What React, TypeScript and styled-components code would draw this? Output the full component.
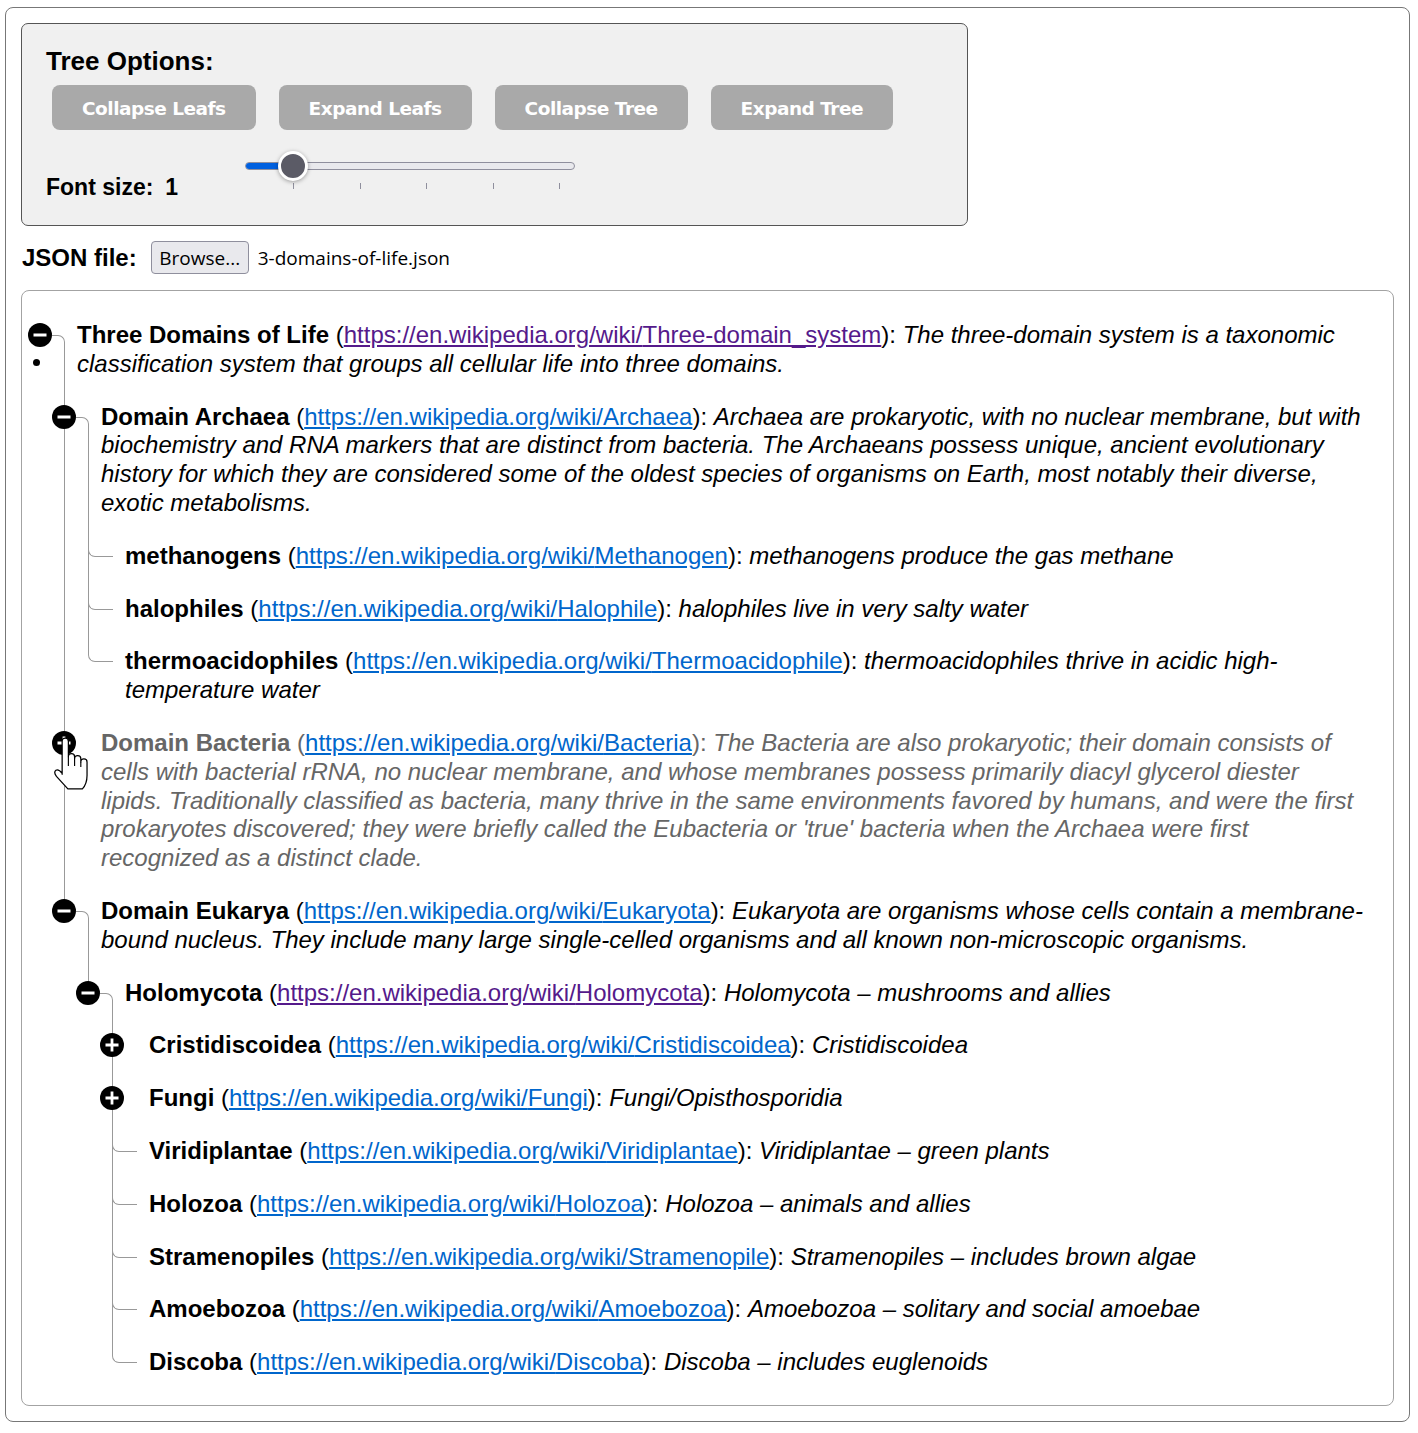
import React from "react";
import styled, { createGlobalStyle, css } from "styled-components";

const LINE = "#999";

const GlobalStyle = createGlobalStyle`
  html, body { margin: 0; padding: 0; background: #fff; }
  body { font-family: "Liberation Sans", Arial, sans-serif; color: #000; }
  *, *::before, *::after { box-sizing: border-box; }
`;

const Page = styled.div`
  margin: 7px 0 0 5px;
  width: 1405px;
  border: 1px solid #777;
  border-radius: 8px;
  padding: 15px;
`;

const OptionsPanel = styled.section`
  width: 947px;
  background: #f0f0f0;
  border: 1px solid #555;
  border-radius: 7px;
  padding: 22px 24px 24px;
`;

const PanelTitle = styled.h2`
  margin: 0;
  font-size: 26px;
  line-height: 30px;
  font-weight: bold;
`;

const ButtonRow = styled.div`
  display: flex;
  gap: 23px;
  margin: 9px 0 0 6px;
`;

const OptionButton = styled.button`
  height: 45px;
  padding: 0 30px;
  border: none;
  border-radius: 8px;
  background: #a9a9a9;
  color: #fff;
  font-family: "DejaVu Sans", Verdana, sans-serif;
  font-weight: bold;
  font-size: 18.5px;
  letter-spacing: -0.5px;
  padding-top: 1px;
`;

const FontRow = styled.div`
  display: flex;
  align-items: flex-start;
  margin-top: 21px;
`;

const FontLabel = styled.div`
  width: 199px;
  margin-top: 22px;
  font-size: 23px;
  line-height: 28px;
  font-weight: bold;
`;

const FontValue = styled.span`
  margin-left: 12px;
`;

const SliderBox = styled.div`
  position: relative;
  width: 330px;
  padding-top: 11px;
`;

const Track = styled.div`
  height: 8px;
  border: 1px solid #8f8f9d;
  border-radius: 4px;
  background: #e9e9ed;
  overflow: hidden;
  display: flex;
`;

const TrackFill = styled.div`
  background: #0060df;
  height: 100%;
`;

const Thumb = styled.div`
  position: absolute;
  top: 0;
  width: 30px;
  height: 30px;
  border-radius: 50%;
  background: #5b5b66;
  border: 3px solid #fff;
  box-shadow: 0 1px 4px rgba(0, 0, 0, 0.35);
`;

const Ticks = styled.div`
  display: flex;
  justify-content: space-between;
  margin-top: 13px;
  padding: 0 15px 0 48px;
`;

const Tick = styled.span`
  width: 1px;
  height: 6px;
  background: #8f8f9d;
`;

const FileRow = styled.div`
  display: flex;
  align-items: center;
  height: 33px;
  margin: 15px 0 16px 1px;
`;

const FileLabel = styled.span`
  font-size: 24px;
  font-weight: bold;
`;

const BrowseButton = styled.button`
  margin-left: 14px;
  height: 33px;
  width: 98px;
  padding: 0;
  border: 1px solid #8f8f9d;
  border-radius: 4px;
  background: #e9e9ed;
  color: #000;
  font-family: "Open Sans", "Noto Sans", sans-serif;
  font-size: 19px;
`;

const FileName = styled.span`
  margin-left: 9px;
  font-family: "Open Sans", "Noto Sans", sans-serif;
  font-size: 19px;
`;

const TreeBox = styled.div`
  border: 1px solid #a3a3a3;
  border-radius: 8px;
  padding: 30px 28px 28px 6px;
  font-size: 24px;
  line-height: 28.8px;
`;

const NodeBlock = styled.div<{ $root?: boolean; $last?: boolean; $leaf?: boolean }>`
  position: relative;
  ${(p) =>
    !p.$root &&
    css`
      padding-top: 24px;
      &::before {
        content: "";
        position: absolute;
        left: 12px;
        top: 0;
        height: 39px;
        width: ${p.$leaf ? "25px" : "1px"};
        border-left: 1px solid ${LINE};
        ${p.$leaf &&
        css`
          border-bottom: 1px solid ${LINE};
          border-bottom-left-radius: 7px;
        `}
      }
    `}
  ${(p) =>
    !p.$root &&
    !p.$last &&
    css`
      &::after {
        content: "";
        position: absolute;
        left: 12px;
        top: 0;
        bottom: 0;
        border-left: 1px solid ${LINE};
      }
    `}
`;

const Header = styled.div<{ $open?: boolean }>`
  position: relative;
  display: flex;
  ${(p) =>
    p.$open &&
    css`
      &::after {
        content: "";
        position: absolute;
        left: 24px;
        top: 14px;
        bottom: 0;
        width: 13px;
        border-top: 1px solid ${LINE};
        border-right: 1px solid ${LINE};
        border-top-right-radius: 7px;
      }
    `}
`;

const IconCol = styled.div`
  position: relative;
  width: 49px;
  flex-shrink: 0;
  display: flex;
  flex-direction: column;
`;

const ToggleSvg = styled.svg`
  position: relative;
  z-index: 1;
  display: block;
  margin-top: 2px;
  cursor: pointer;
`;

const Dot = styled.span`
  width: 7px;
  height: 7px;
  border-radius: 50%;
  background: #000;
  margin: 12px 0 0 5px;
`;

const CursorSvg = styled.svg`
  position: absolute;
  left: 0;
  top: 7px;
  z-index: 2;
  pointer-events: none;
`;

const Text = styled.div<{ $dim?: boolean }>`
  flex: 1;
  min-width: 0;
  color: ${(p) => (p.$dim ? "#666" : "#000")};
`;

const Name = styled.b`
  font-weight: bold;
`;

const Desc = styled.i`
  font-style: italic;
`;

const WikiLink = styled.a<{ $visited?: boolean }>`
  color: ${(p) => (p.$visited ? "#551a8b" : "#0066cc")};
  text-decoration: underline;
`;

const Children = styled.div`
  margin-left: 24px;
`;

type TNode = {
  name: string;
  page: string;
  desc: string;
  visited?: boolean;
  collapsed?: boolean;
  dim?: boolean;
  hover?: boolean;
  children?: TNode[];
};

const data: TNode = {
  name: "Three Domains of Life",
  page: "Three-domain_system",
  visited: true,
  desc: "The three-domain system is a taxonomic classification system that groups all cellular life into three domains.",
  children: [
    {
      name: "Domain Archaea",
      page: "Archaea",
      desc: "Archaea are prokaryotic, with no nuclear membrane, but with biochemistry and RNA markers that are distinct from bacteria. The Archaeans possess unique, ancient evolutionary history for which they are considered some of the oldest species of organisms on Earth, most notably their diverse, exotic metabolisms.",
      children: [
        { name: "methanogens", page: "Methanogen", desc: "methanogens produce the gas methane" },
        { name: "halophiles", page: "Halophile", desc: "halophiles live in very salty water" },
        { name: "thermoacidophiles", page: "Thermoacidophile", desc: "thermoacidophiles thrive in acidic high-temperature water" },
      ],
    },
    {
      name: "Domain Bacteria",
      page: "Bacteria",
      collapsed: true,
      dim: true,
      hover: true,
      desc: "The Bacteria are also prokaryotic; their domain consists of cells with bacterial rRNA, no nuclear membrane, and whose membranes possess primarily diacyl glycerol diester lipids. Traditionally classified as bacteria, many thrive in the same environments favored by humans, and were the first prokaryotes discovered; they were briefly called the Eubacteria or 'true' bacteria when the Archaea were first recognized as a distinct clade.",
    },
    {
      name: "Domain Eukarya",
      page: "Eukaryota",
      desc: "Eukaryota are organisms whose cells contain a membrane-bound nucleus. They include many large single-celled organisms and all known non-microscopic organisms.",
      children: [
        {
          name: "Holomycota",
          page: "Holomycota",
          visited: true,
          desc: "Holomycota – mushrooms and allies",
          children: [
            { name: "Cristidiscoidea", page: "Cristidiscoidea", collapsed: true, desc: "Cristidiscoidea" },
            { name: "Fungi", page: "Fungi", collapsed: true, desc: "Fungi/Opisthosporidia" },
            { name: "Viridiplantae", page: "Viridiplantae", desc: "Viridiplantae – green plants" },
            { name: "Holozoa", page: "Holozoa", desc: "Holozoa – animals and allies" },
            { name: "Stramenopiles", page: "Stramenopile", desc: "Stramenopiles – includes brown algae" },
            { name: "Amoebozoa", page: "Amoebozoa", desc: "Amoebozoa – solitary and social amoebae" },
            { name: "Discoba", page: "Discoba", desc: "Discoba – includes euglenoids" },
          ],
        },
      ],
    },
  ],
};

function ToggleIcon({ open }: { open: boolean }) {
  return (
    <ToggleSvg width="24" height="24" viewBox="0 0 24 24">
      <circle cx="12" cy="12" r="12" fill="#000" />
      <rect x="5.5" y="10.5" width="13" height="3" fill="#fff" />
      {!open && <rect x="10.6" y="5.5" width="2.8" height="13" fill="#fff" />}
    </ToggleSvg>
  );
}

function HandCursor() {
  return (
    <CursorSvg width="40" height="56" viewBox="0 0 38 54">
      <path
        d="M9.5 37 L9.5 5 Q9.5 2 12.5 2 Q15.5 2 15.5 5 L15.5 20 Q15.5 17 18.5 17 Q21.5 17 21.5 20 L21.5 22 Q21.5 19 24.5 19 Q27.5 19 27.5 22 L27.5 25 Q27.5 22 30.5 22 Q33.5 22 33.5 25 L33.5 38 Q33.5 46 29 51 L15 51 L4 39 Q1 35 3.5 33 Q6 31.5 9.5 36 Z"
        fill="#fff"
        stroke="#000"
        strokeWidth="1.2"
        strokeLinejoin="round"
      />
      <path d="M15.5 20 L15.5 29 M21.5 22 L21.5 29 M27.5 25 L27.5 30" stroke="#000" strokeWidth="1.1" />
    </CursorSvg>
  );
}

function TreeNode({ node, root, last }: { node: TNode; root?: boolean; last?: boolean }) {
  const hasKids = !!node.children && node.children.length > 0;
  const expandable = hasKids || !!node.collapsed;
  const open = hasKids && !node.collapsed;
  return (
    <NodeBlock $root={root} $last={last} $leaf={!expandable}>
      <Header $open={open}>
        <IconCol>
          {expandable && <ToggleIcon open={open} />}
          {root && <Dot />}
          {node.hover && <HandCursor />}
        </IconCol>
        <Text $dim={node.dim}>
          <Name>{node.name}</Name> (
          <WikiLink href={`https://en.wikipedia.org/wiki/${node.page}`} $visited={node.visited}>
            https://en.wikipedia.org/wiki/{node.page}
          </WikiLink>
          ): <Desc>{node.desc}</Desc>
        </Text>
      </Header>
      {open && (
        <Children>
          {node.children!.map((c, i) => (
            <TreeNode key={c.name} node={c} last={i === node.children!.length - 1} />
          ))}
        </Children>
      )}
    </NodeBlock>
  );
}

export default function App() {
  return (
    <>
      <GlobalStyle />
      <Page>
        <OptionsPanel>
          <PanelTitle>Tree Options:</PanelTitle>
          <ButtonRow>
            <OptionButton>Collapse Leafs</OptionButton>
            <OptionButton>Expand Leafs</OptionButton>
            <OptionButton>Collapse Tree</OptionButton>
            <OptionButton>Expand Tree</OptionButton>
          </ButtonRow>
          <FontRow>
            <FontLabel>
              Font size:<FontValue>1</FontValue>
            </FontLabel>
            <SliderBox>
              <Track>
                <TrackFill style={{ width: "48px" }} />
              </Track>
              <Thumb style={{ left: "33px" }} />
              <Ticks>
                <Tick />
                <Tick />
                <Tick />
                <Tick />
                <Tick />
              </Ticks>
            </SliderBox>
          </FontRow>
        </OptionsPanel>
        <FileRow>
          <FileLabel>JSON file:</FileLabel>
          <BrowseButton>Browse...</BrowseButton>
          <FileName>3-domains-of-life.json</FileName>
        </FileRow>
        <TreeBox>
          <TreeNode node={data} root />
        </TreeBox>
      </Page>
    </>
  );
}
